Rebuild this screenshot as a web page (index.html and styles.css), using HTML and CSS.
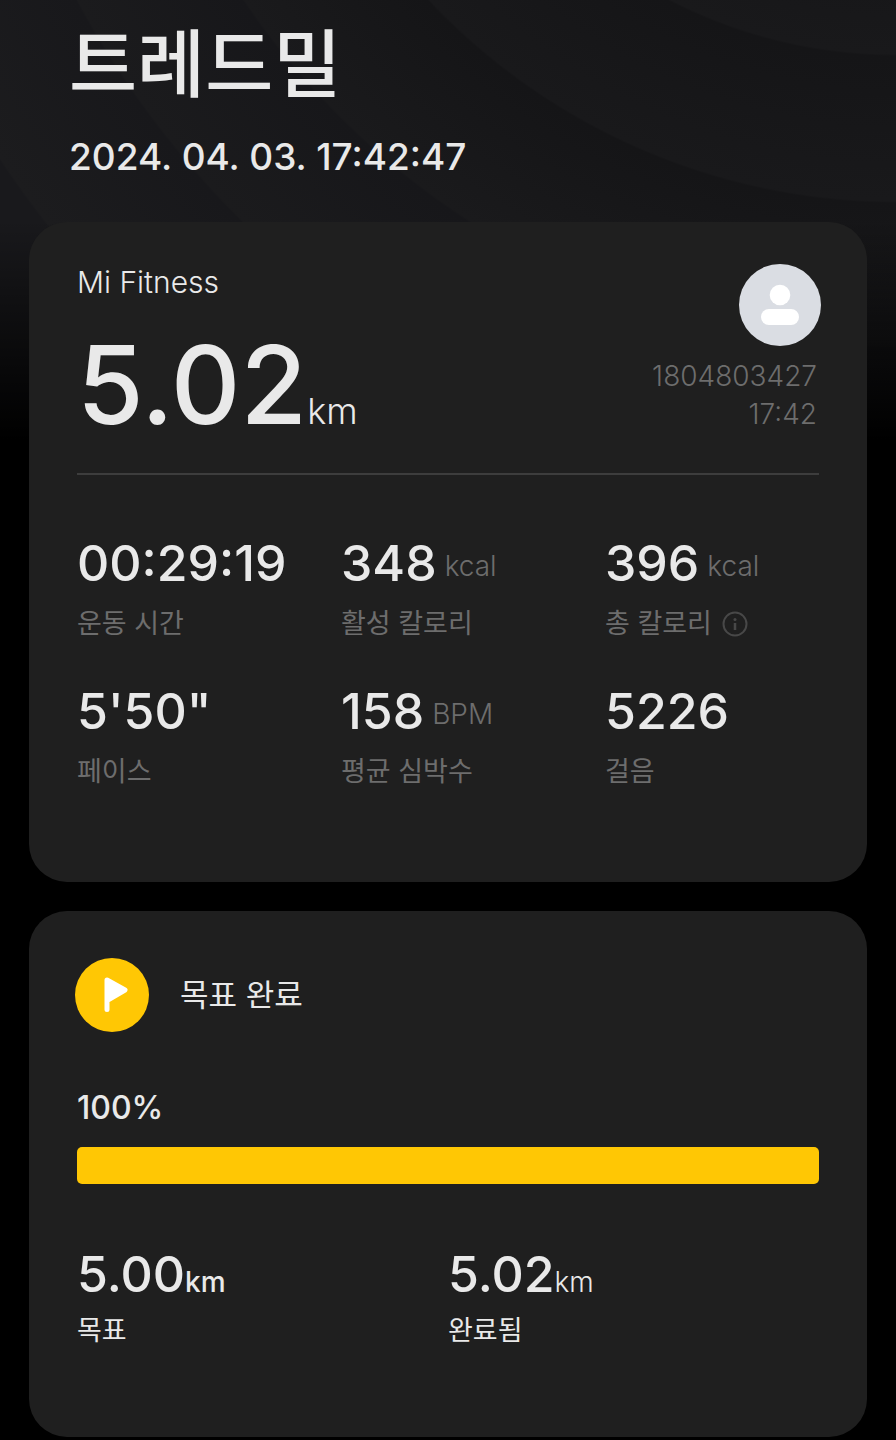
FILE: index.html
```html
<!DOCTYPE html>
<html lang="ko">
<head>
<meta charset="utf-8">
<meta name="viewport" content="width=device-width, initial-scale=1">
<title>트레드밀</title>
<link rel="stylesheet" href="styles.css">
</head>
<body>
<main class="page">
  <header class="header">
    <h1 class="title">트레드밀</h1>
    <time class="date" datetime="2024-04-03T17:42:47">2024. 04. 03. 17:42:47</time>
  </header>

  <section class="card summary">
    <div class="top">
      <div class="distance-block">
        <p class="source">Mi Fitness</p>
        <p class="distance">5.02<span class="distance-unit">km</span></p>
      </div>
      <div class="user">
        <svg class="avatar" viewBox="0 0 82 82" role="img" aria-label="Profile">
          <circle cx="41" cy="41" r="41" fill="#dadde3"/>
          <circle cx="41" cy="31" r="10.300" fill="#fff"/>
          <rect x="22" y="45" width="38" height="16" rx="8" fill="#fff"/>
        </svg>
        <p class="user-line">1804803427</p>
        <p class="user-line">17:42</p>
      </div>
    </div>
    <dl class="stats">
      <div class="stat"><dd class="value">00:29:19</dd><dt class="label">운동 시간</dt></div>
      <div class="stat"><dd class="value">348<span class="unit">kcal</span></dd><dt class="label">활성 칼로리</dt></div>
      <div class="stat"><dd class="value">396<span class="unit">kcal</span></dd><dt class="label">총 칼로리
        <button class="info" type="button" aria-label="정보"><svg viewBox="0 0 26 26"><circle cx="13" cy="13" r="11.500" fill="none" stroke="currentColor" stroke-width="2"/><circle cx="13" cy="8.500" r="1.500" fill="currentColor"/><path d="M13 12v7" stroke="currentColor" stroke-width="2.500"/></svg></button></dt></div>
      <div class="stat"><dd class="value">5'50"</dd><dt class="label">페이스</dt></div>
      <div class="stat"><dd class="value">158<span class="unit">BPM</span></dd><dt class="label">평균 심박수</dt></div>
      <div class="stat"><dd class="value">5226</dd><dt class="label">걸음</dt></div>
    </dl>
  </section>

  <section class="card goal">
    <div class="goal-head">
      <svg class="flag" viewBox="0 0 74 74" aria-hidden="true">
        <circle cx="37" cy="37" r="37" fill="#ffc704"/>
        <path d="M32 22v29.500M32 22l18 10-18 10.500z" fill="#fff" stroke="#fff" stroke-width="5" stroke-linecap="round" stroke-linejoin="round"/>
      </svg>
      <h2 class="goal-title">목표 완료</h2>
    </div>
    <label class="percent" for="goal-progress">100%</label>
    <progress class="bar" id="goal-progress" max="100" value="100">100%</progress>
    <dl class="results">
      <div class="stat"><dd class="value">5.00<span class="result-unit strong">km</span></dd><dt class="label bright">목표</dt></div>
      <div class="stat"><dd class="value">5.02<span class="result-unit">km</span></dd><dt class="label bright">완료됨</dt></div>
    </dl>
  </section>
</main>
</body>
</html>
```
FILE: styles.css
```css
* { box-sizing: border-box; }

body {
  margin: 0;
  background: #000;
  color: #e9e9e9;
  font-family: Inter, "Noto Sans CJK KR", sans-serif;
}

h1, h2, p, dl, dd { margin: 0; }

.page {
  min-height: 100vh;
  padding: 20px 29px 3px;
  background:
    linear-gradient(transparent 220px, #000 440px),
    radial-gradient(circle at 100% -440px,
      #151517 350px, #19191b 494px,
      #151517 496px, #19191b 641px,
      #151517 643px, #1a1a1c 786px,
      #17171a 788px, #1b1b1d 929px,
      #18181b 931px, #1c1c1e 1077px,
      #19191c 1079px);
}

.header { padding: 0 40px 40px; }

.title {
  font-size: 74px;
  line-height: 88px;
  font-weight: 500;
}

.date {
  display: block;
  margin-top: 24px;
  font-size: 37px;
  line-height: 50px;
  font-weight: 500;
}

.card {
  padding: 42px 48px 0;
  border-radius: 38px;
  background: #1f1f1f;
}

.summary { padding-bottom: 92px; }

.top {
  display: flex;
  justify-content: space-between;
  padding-bottom: 21px;
  border-bottom: 2px solid #3d3d3d;
}

.source {
  font-size: 30px;
  line-height: 36px;
  font-weight: 300;
}

.distance {
  margin-top: 17px;
  font-size: 108px;
  line-height: 135px;
  font-weight: 500;
}

.distance-unit {
  font-size: 36px;
  line-height: 1;
  font-weight: 300;
}

.user { text-align: right; }

.avatar {
  display: block;
  width: 82px;
  height: 82px;
  margin: 0 -2px 11px auto;
}

.user-line {
  padding-right: 2px;
  font-size: 28px;
  line-height: 38px;
  font-weight: 300;
  color: #6d6d6d;
}

.stats {
  display: grid;
  grid-template-columns: 264fr 264fr 214fr;
  row-gap: 37px;
  padding-top: 56px;
}

.stat { display: flex; flex-direction: column; }

.value {
  font-size: 50px;
  line-height: 64px;
  font-weight: 500;
  white-space: nowrap;
}

.unit {
  margin-left: 8px;
  font-size: 28px;
  line-height: 1;
  font-weight: 300;
  vertical-align: 5px;
  color: #6d6d6d;
}

.label {
  display: flex;
  align-items: center;
  gap: 10px;
  margin-top: 11px;
  font-size: 27px;
  line-height: 36px;
  font-weight: 400;
  color: #6d6d6d;
  white-space: nowrap;
}

.bright {
  margin-top: 7px;
  color: #e9e9e9;
}

.info {
  width: 26px;
  height: 26px;
  padding: 0;
  border: 0;
  background: none;
  color: #484848;
}

.info svg { display: block; }

.goal {
  margin-top: 29px;
  padding-top: 47px;
  padding-bottom: 88px;
}

.goal-head {
  display: flex;
  align-items: center;
  gap: 31px;
}

.flag {
  width: 74px;
  height: 74px;
  margin-left: -2px;
}

.goal-title {
  font-size: 31px;
  line-height: 40px;
  font-weight: 400;
}

.percent {
  display: block;
  margin-top: 56px;
  font-size: 32px;
  line-height: 40px;
  font-weight: 500;
}

.bar {
  display: block;
  width: 100%;
  height: 37px;
  margin-top: 19px;
  border: 0;
  border-radius: 5px;
  overflow: hidden;
  appearance: none;
  background: #333;
}

.bar::-webkit-progress-bar { background: #333; }
.bar::-webkit-progress-value { background: #ffc704; }
.bar::-moz-progress-bar { background: #ffc704; }

.results {
  display: grid;
  grid-template-columns: 1fr 1fr;
  padding-top: 58px;
}

.result-unit {
  font-size: 28px;
  line-height: 1;
  font-weight: 300;
}

.strong { font-weight: 500; }
```
